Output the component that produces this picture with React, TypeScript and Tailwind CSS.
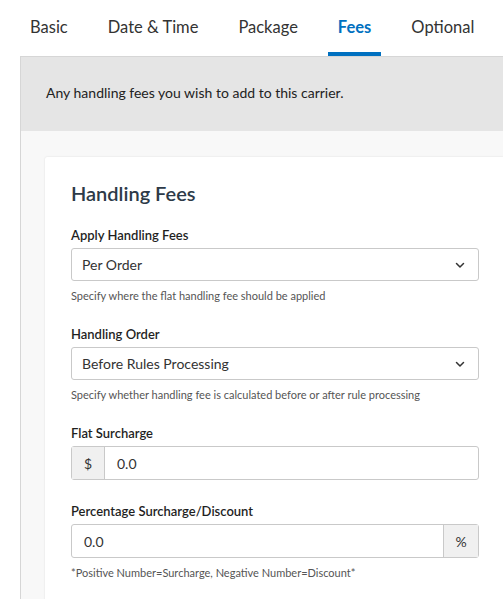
import { ReactNode } from "react";

const tabs = ["Basic", "Date & Time", "Package", "Fees", "Optional"];

function Chevron() {
  return (
    <svg width="12" height="12" viewBox="0 0 12 12" fill="none" className="text-[#333]">
      <path d="M2.5 4.5 6 8l3.5-3.5" stroke="currentColor" strokeWidth="1.5" strokeLinecap="round" strokeLinejoin="round" />
    </svg>
  );
}

function Field({ label, children, help }: { label: string; children: ReactNode; help?: string }) {
  return (
    <div className="mb-[22px]">
      <div className="mb-[4px] text-[13px] font-semibold leading-[18px] text-[#1f1f1f]">{label}</div>
      {children}
      {help && <div className="mt-[7px] text-[11px] leading-[15px] text-[#555]">{help}</div>}
    </div>
  );
}

function Select({ value }: { value: string }) {
  return (
    <div className="flex h-[33px] w-[408px] items-center justify-between rounded-[3px] border border-[#c9c9c9] bg-white pl-[10px] pr-[12px] text-[14px] text-[#333]">
      <span>{value}</span>
      <Chevron />
    </div>
  );
}

export default function App() {
  return (
    <div className="w-[503px] h-[599px] overflow-hidden bg-white font-['Lato',sans-serif]">
      <nav className="flex h-[56px] pl-[10px]">
        {tabs.map((t) => (
          <div
            key={t}
            className={
              t === "Fees"
                ? "mx-[10px] flex items-end border-b-4 border-[#0070c0] px-[10px] pb-[12px] text-[16.5px] font-bold text-[#0070c0]"
                : "mx-[10px] flex items-end border-b-4 border-transparent px-[10px] pb-[12px] text-[16.5px] text-[#333]"
            }
          >
            {t}
          </div>
        ))}
      </nav>
      <div className="ml-[20px] w-[510px] border-l border-t border-[#d6d6d6]">
        <div className="flex h-[74px] items-center bg-[#e5e5e5] pb-[3px] pl-[25px] text-[14px] text-[#222]">
          Any handling fees you wish to add to this carrier.
        </div>
        <div className="bg-[#f8f8f8] px-[24px] pt-[26px]">
          <div className="w-[460px] rounded-t-[2px] bg-white px-[26px] pt-[24px] pb-[20px] shadow-[0_0_2px_rgba(0,0,0,0.12)]">
            <h2 className="mb-[21px] text-[20px] font-semibold leading-[24px] text-[#2d3a48]">Handling Fees</h2>
            <Field label="Apply Handling Fees" help="Specify where the flat handling fee should be applied">
              <Select value="Per Order" />
            </Field>
            <Field label="Handling Order" help="Specify whether handling fee is calculated before or after rule processing">
              <Select value="Before Rules Processing" />
            </Field>
            <Field label="Flat Surcharge">
              <div className="flex h-[34px] w-[408px] rounded-[3px] border border-[#c9c9c9] bg-white text-[14px] text-[#333]">
                <div className="flex w-[33px] items-center justify-center border-r border-[#c9c9c9] bg-[#f0f0f0]">$</div>
                <div className="flex items-center pl-[12px]">0.0</div>
              </div>
            </Field>
            <Field label="Percentage Surcharge/Discount" help="*Positive Number=Surcharge, Negative Number=Discount*">
              <div className="flex h-[34px] w-[408px] rounded-[3px] border border-[#c9c9c9] bg-white text-[14px] text-[#333]">
                <div className="flex flex-1 items-center pl-[12px]">0.0</div>
                <div className="flex w-[35px] items-center justify-center border-l border-[#c9c9c9] bg-[#f0f0f0]">%</div>
              </div>
            </Field>
          </div>
        </div>
      </div>
    </div>
  );
}
